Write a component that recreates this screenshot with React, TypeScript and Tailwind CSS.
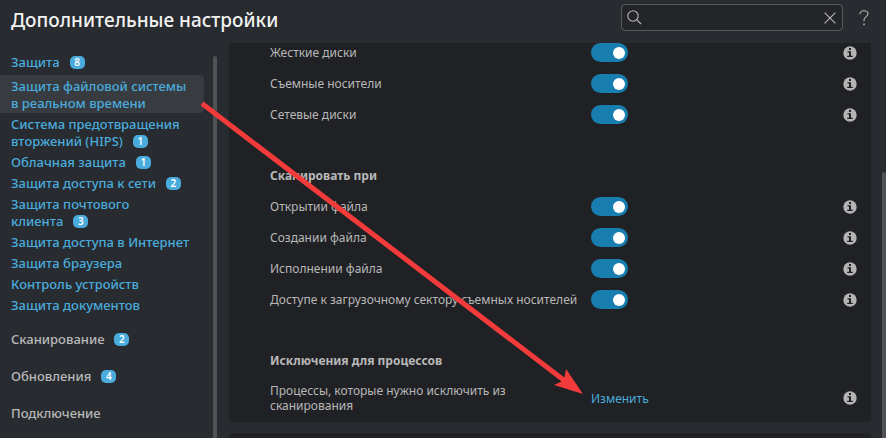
type NavItem = {
    lead?: string;
    last: string;
    badge?: number;
    active?: boolean;
};

const protection: NavItem[] = [
    { lead: 'Защита файловой системы', last: 'в реальном времени', active: true },
    { lead: 'Система предотвращения', last: 'вторжений (HIPS)', badge: 1 },
    { last: 'Облачная защита', badge: 1 },
    { last: 'Защита доступа к сети', badge: 2 },
    { lead: 'Защита почтового', last: 'клиента', badge: 3 },
    { last: 'Защита доступа в Интернет' },
    { last: 'Защита браузера' },
    { last: 'Контроль устройств' },
    { last: 'Защита документов' },
];

const groups: NavItem[] = [
    { last: 'Сканирование', badge: 2 },
    { last: 'Обновления', badge: 4 },
    { last: 'Подключение' },
];

const media = ['Жесткие диски', 'Съемные носители', 'Сетевые диски'];

const triggers = [
    'Открытии файла',
    'Создании файла',
    'Исполнении файла',
    'Доступе к загрузочному сектору съемных носителей',
];

function NavLink({ item }: { item: NavItem }) {
    return (
        <a
            href="#"
            className={`block pt-[3px] pb-px pl-[11px] ${item.active ? 'rounded-r bg-[#383b3f]' : ''}`}
        >
            {item.lead}{' '}
            <span className="whitespace-nowrap">
                {item.last}
                {item.badge && (
                    <span className="ml-2.5 inline-block h-[13px] w-[15px] rounded-[5px] bg-[#4aabdd] text-center align-[1px] text-[10px] leading-[13px] font-semibold text-white">
                        {item.badge}
                    </span>
                )}
            </span>
        </a>
    );
}

function InfoButton() {
    return (
        <button type="button" aria-label="Справка" className="block size-[14px]">
            <svg viewBox="0 0 14 14" className="size-[14px]">
                <circle cx="7" cy="7" r="6.7" fill="#b4b4b4" />
                <path d="M6 2h2v2H6zM4.5 5.2H8v4.6h1.8v1.3H4.2V9.8H6V6.5H4.5z" fill="#202124" />
            </svg>
        </button>
    );
}

function ToggleRow({ id, label }: { id: string; label: string }) {
    return (
        <div className="grid h-[19px] grid-cols-[321px_1fr_auto] items-center">
            <label htmlFor={id}>{label}</label>
            <input
                id={id}
                type="checkbox"
                defaultChecked
                className="flex h-[19px] w-[37px] appearance-none items-center rounded-full bg-[#4a4d52] px-[3px] before:size-3 before:rounded-full before:bg-white checked:justify-end checked:bg-[#187eb0]"
            />
            <InfoButton />
        </div>
    );
}

export default function App() {
    return (
        <div className="relative flex h-screen flex-col overflow-hidden bg-[#282b2f] font-['Noto_Sans','Open_Sans',sans-serif] text-[12px] text-[#b8b8b8]">
            <header className="flex h-[43px] shrink-0 items-start justify-between pt-1 pr-[17px] pl-[11px]">
                <h1 className="text-[19px] leading-8 font-medium text-[#f2f2f2]">Дополнительные настройки</h1>
                <div className="flex items-center gap-4">
                    <div className="flex h-[27px] w-[222px] items-center rounded border border-[#58595b] bg-[#242528] px-[5px] text-[#b8b8b8]">
                        <svg viewBox="0 0 15 15" className="size-[15px] shrink-0" fill="none" stroke="#b8b8b8" strokeWidth="1.1">
                            <circle cx="6" cy="6" r="5.2" />
                            <path d="M9.7 9.7 14 14" />
                        </svg>
                        <input aria-label="Поиск" className="min-w-0 flex-1 bg-transparent outline-none" />
                        <button type="button" aria-label="Очистить" className="mr-px">
                            <svg viewBox="0 0 12 12" className="size-3" fill="none" stroke="#b8b8b8" strokeWidth="1.1">
                                <path d="M.6 .6 11.4 11.4M11.4 .6 .6 11.4" />
                            </svg>
                        </button>
                    </div>
                    <button type="button" aria-label="Помощь">
                        <svg viewBox="0 0 10 16" className="h-4 w-[10px]" fill="none" stroke="#b8b8b8" strokeWidth="1.1">
                            <path d="M1 4.3V3.8C1 2 2.6 .8 5 .8s4 1.2 4 3c0 3-4 3.2-4 6v1.4" />
                            <path d="M5 13.6v1.6" strokeWidth="1.5" />
                        </svg>
                    </button>
                </div>
            </header>

            <div className="flex min-h-0 flex-1">
                <nav className="w-[204px] shrink-0 pt-2 text-[13px] leading-[17px] font-medium">
                    <div className="text-[#4aabdd]">
                        <div className="mb-[3px]">
                            <NavLink item={{ last: 'Защита', badge: 8 }} />
                        </div>
                        {protection.map((item) => (
                            <NavLink key={item.last} item={item} />
                        ))}
                    </div>
                    <div className="mt-[13px] flex flex-col gap-4">
                        {groups.map((item) => (
                            <NavLink key={item.last} item={item} />
                        ))}
                    </div>
                </nav>
                <div className="mt-[13px] mr-3 ml-[9px] w-1 shrink-0 rounded-t-full bg-[#505154]" />

                <main className="min-w-0 flex-1 overflow-hidden">
                    <div className="flex flex-col gap-[42px] rounded-b bg-[#202124] pr-3.5 pb-2 pl-[41px] leading-[15px]">
                        <section className="flex flex-col gap-3">
                            {media.map((label, i) => (
                                <ToggleRow key={label} id={`media-${i}`} label={label} />
                            ))}
                        </section>
                        <section className="flex flex-col gap-3">
                            <h2 className="leading-[19px] font-bold">Сканировать при</h2>
                            {triggers.map((label, i) => (
                                <ToggleRow key={label} id={`trigger-${i}`} label={label} />
                            ))}
                        </section>
                        <section className="flex flex-col gap-3">
                            <h2 className="leading-[19px] font-bold">Исключения для процессов</h2>
                            <div className="grid grid-cols-[321px_1fr_auto] items-center py-px">
                                <p className="pr-6">Процессы, которые нужно исключить из сканирования</p>
                                <a href="#" className="text-[#4aabdd]">Изменить</a>
                                <InfoButton />
                            </div>
                        </section>
                    </div>
                    <div className="mt-[11px] h-20 rounded-t bg-[#202124]" />
                </main>
                <div className="mt-[129px] ml-[11px] w-1 shrink-0 rounded-t-full bg-[#505154]" />
            </div>

            <svg
                viewBox="0 0 886 438"
                className="pointer-events-none absolute top-0 left-0 h-[438px] w-[886px]"
                fill="#f43b3b"
            >
                <path d="M203.5 101.5 564.5 377.5 566 369 583 394 554 385 561.5 381.5 200.5 105.5z" />
            </svg>
        </div>
    );
}
